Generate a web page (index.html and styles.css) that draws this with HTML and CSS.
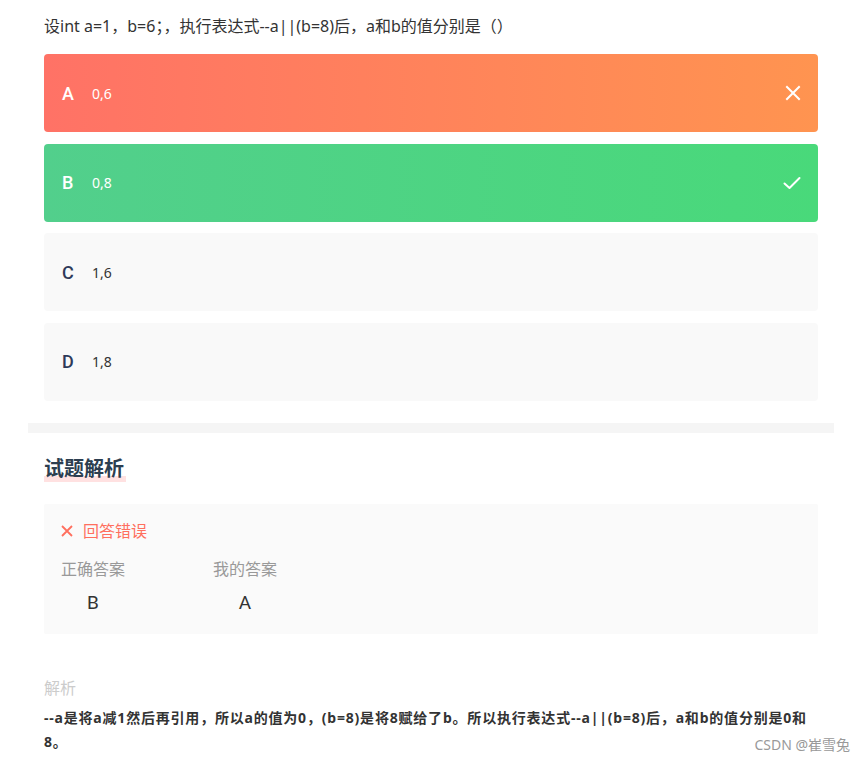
FILE: index.html
```html
<!DOCTYPE html>
<html lang="zh-CN">
<head>
<meta charset="utf-8">
<title>试题</title>
<link rel="stylesheet" href="styles.css">
</head>
<body>
<div class="page">
  <div class="question">设int a=1，b=6；，执行表达式--a||(b=8)后，a和b的值分别是（）</div>
  <div class="options">
    <div class="option wrong">
      <span class="letter">A</span><span class="value">0,6</span>
      <svg class="icon" width="16" height="16" viewBox="0 0 16 16"><path d="M2 2L14 14M14 2L2 14" stroke="#fff" stroke-width="2" fill="none" stroke-linecap="square"/></svg>
    </div>
    <div class="option right">
      <span class="letter">B</span><span class="value">0,8</span>
      <svg class="icon" width="18" height="16" viewBox="0 0 18 16"><path d="M1.5 8.5L6.5 13L16.5 3" stroke="#fff" stroke-width="2" fill="none" stroke-linecap="round" stroke-linejoin="round"/></svg>
    </div>
    <div class="option">
      <span class="letter">C</span><span class="value">1,6</span>
    </div>
    <div class="option">
      <span class="letter">D</span><span class="value">1,8</span>
    </div>
  </div>
</div>
<div class="divider"></div>
<div class="page">
  <h2 class="title"><span class="hl">试题解析</span></h2>
  <div class="result">
    <div class="status"><svg class="x" width="12" height="12" viewBox="0 0 12 12"><path d="M1 1L11 11M11 1L1 11" stroke="#ff6f5e" stroke-width="1.8" fill="none"/></svg><span>回答错误</span></div>
    <div class="answers">
      <div class="col"><div class="label">正确答案</div><div class="ans">B</div></div>
      <div class="col"><div class="label">我的答案</div><div class="ans">A</div></div>
    </div>
  </div>
  <div class="analysis-label">解析</div>
  <div class="analysis">--a是将a减1然后再引用，所以a的值为0，(b=8)是将8赋给了b。所以执行表达式--a||(b=8)后，a和b的值分别是0和8。</div>
</div>
<div class="watermark">CSDN @崔雪兔</div>
</body>
</html>
```
FILE: styles.css
```css
html, body {
  margin: 0;
  padding: 0;
  background: #fff;
}
body {
  font-family: "Noto Sans", "Noto Sans CJK SC", sans-serif;
  color: #333;
  position: relative;
  min-height: 761px;
}
.page {
  width: 774px;
  margin-left: 44px;
}
.question {
  padding-top: 14px;
  font-size: 16px;
  line-height: 24px;
  color: #333;
  margin-bottom: 16px;
}
.options {
  display: flex;
  flex-direction: column;
  gap: 11.5px;
}
.option {
  height: 78px;
  border-radius: 4px;
  background: #f9f9f9;
  display: flex;
  align-items: center;
  padding: 0 17px 0 18px;
}
.option.wrong {
  background: linear-gradient(90deg, #ff7266 0%, #ff9450 100%);
  color: #fff;
}
.option.right {
  background: linear-gradient(90deg, #52cf8c 0%, #49d97a 100%);
  color: #fff;
}
.letter {
  width: 30px;
  font-family: "Roboto", sans-serif;
  font-weight: 500;
  font-size: 18px;
  color: #2e3a59;
}
.wrong .letter, .right .letter, .wrong .value, .right .value {
  color: #fff;
}
.value {
  font-size: 14px;
  color: #333;
  flex: 1;
}
.icon {
  display: block;
}
.divider {
  margin: 22px 0 0 28px;
  width: 806px;
  height: 10px;
  background: #f5f5f5;
}
.title {
  margin: 22px 0 0 0;
  font-size: 20px;
  line-height: 28px;
  font-weight: 700;
  color: #2c3e50;
}
.hl {
  background: linear-gradient(to bottom, transparent 0, transparent 21px, #ffe1e1 21px, #ffe1e1 28px, transparent 28px);
  padding-right: 2px;
}
.result {
  margin-top: 21px;
  background: #fafafa;
  padding: 16px 17px 18px;
  border-radius: 2px;
}
.status {
  display: flex;
  align-items: center;
  gap: 10px;
  font-size: 16px;
  line-height: 22px;
  color: #ff6f5e;
}
.x { display: block; }
.answers {
  display: flex;
  gap: 88px;
  margin-top: 16px;
}
.col {
  text-align: center;
}
.label {
  font-size: 16px;
  line-height: 22px;
  color: #999;
}
.ans {
  margin-top: 10px;
  font-size: 19px;
  line-height: 26px;
  color: #333;
  font-family: "Roboto", sans-serif;
}
.analysis-label {
  margin-top: 43px;
  font-size: 16px;
  line-height: 22px;
  color: #ccc;
}
.analysis {
  margin-top: 7px;
  font-size: 14px;
  letter-spacing: 0.8px;
  line-height: 24px;
  font-weight: 700;
  color: #333;
}
.watermark {
  position: absolute;
  right: 15px;
  top: 735px;
  font-size: 14px;
  line-height: 20px;
  color: #999;
}
```
